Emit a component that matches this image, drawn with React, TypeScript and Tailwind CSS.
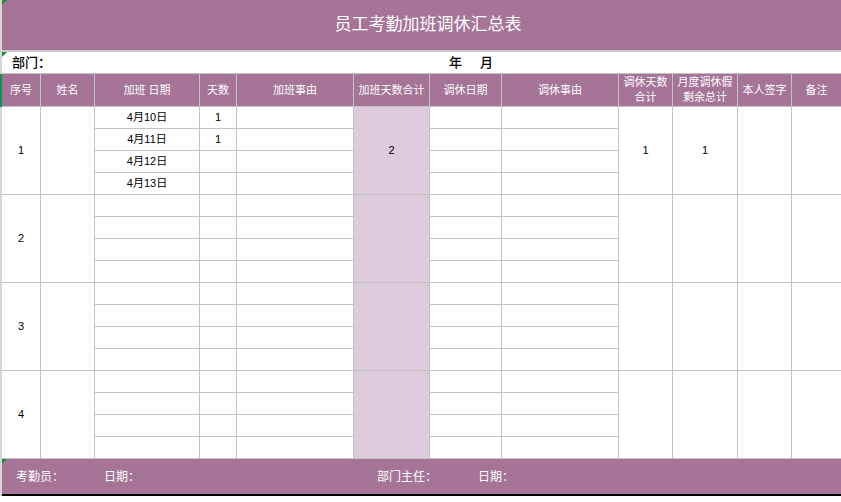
import React from 'react'

const cols = 'grid grid-cols-[39px_54px_105px_37px_117px_76px_72px_117px_54px_65px_54px_49px]'
const line = 'border-[#c3c3c3]'

const headers: string[][] = [
  ['序号'],
  ['姓名'],
  ['加班 日期'],
  ['天数'],
  ['加班事由'],
  ['加班天数合计'],
  ['调休日期'],
  ['调休事由'],
  ['调休天数', '合计'],
  ['月度调休假', '剩余总计'],
  ['本人签字'],
  ['备注'],
]

interface Group {
  no: string
  dates: string[]
  days: string[]
  total: string
  restTotal: string
  remain: string
}

const groups: Group[] = [
  { no: '1', dates: ['4月10日', '4月11日', '4月12日', '4月13日'], days: ['1', '1', '', ''], total: '2', restTotal: '1', remain: '1' },
  { no: '2', dates: ['', '', '', ''], days: ['', '', '', ''], total: '', restTotal: '', remain: '' },
  { no: '3', dates: ['', '', '', ''], days: ['', '', '', ''], total: '', restTotal: '', remain: '' },
  { no: '4', dates: ['', '', '', ''], days: ['', '', '', ''], total: '', restTotal: '', remain: '' },
]

function Corner() {
  return (
    <span className="absolute left-0 top-0 h-0 w-0 border-t-[5px] border-r-[5px] border-t-[#1f8a3b] border-r-transparent" />
  )
}

function Cell({ children, span, pink, last }: { children?: React.ReactNode; span?: boolean; pink?: boolean; last?: boolean }) {
  return (
    <div
      className={`flex items-center justify-center border-b ${last ? '' : 'border-r'} ${line} ${span ? 'row-span-4' : ''} ${pink ? 'bg-[#ddcbdc]' : 'bg-white'}`}
    >
      {children}
    </div>
  )
}

function GroupRows({ g }: { g: Group }) {
  return (
    <div className={`${cols} grid-rows-[22px_22px_22px_22px] text-[11px] text-black`}>
      <Cell span>{g.no}</Cell>
      <Cell span />
      {[0, 1, 2, 3].map((i) => (
        <React.Fragment key={i}>
          <Cell>{g.dates[i]}</Cell>
          <Cell>{g.days[i]}</Cell>
          <Cell />
          {i === 0 && <Cell span pink>{g.total}</Cell>}
          <Cell />
          <Cell />
          {i === 0 && (
            <>
              <Cell span>{g.restTotal}</Cell>
              <Cell span>{g.remain}</Cell>
              <Cell span />
              <Cell span last />
            </>
          )}
        </React.Fragment>
      ))}
    </div>
  )
}

export default function App() {
  return (
    <div className="flex h-[502px] w-[841px] bg-white font-['Liberation_Sans','Noto_Sans_CJK_SC',sans-serif]">
      {/* row header edge */}
      <div className="flex h-[496px] w-[2px] flex-col bg-[#d6d6d6]">
        <div className="h-[74px]" />
        <div className="h-[33px] bg-[#1f8a5a]" />
      </div>

      <div className="flex w-[839px] flex-col">
        <div className={`relative flex h-[52px] items-center justify-center border-b-2 border-[#c9c9c9] bg-[#a57497] pl-[13px] text-[17px] text-white`}>
          <Corner />
          员工考勤加班调休汇总表
        </div>

        <div className={`relative flex h-[22px] items-center border-b ${line} pl-[10px] text-[13px] font-medium text-black`}>
          <Corner />
          <span className="w-[437px]">部门：</span>
          <span>年</span>
          <span className="ml-[18px]">月</span>
        </div>

        <div className={`${cols} h-[33px] bg-[#a57497] text-[11px] leading-[15px] text-white`}>
          {headers.map((h, i) => (
            <div
              key={i}
              className={`flex flex-col items-center justify-center border-b ${i < headers.length - 1 ? 'border-r' : ''} ${line}`}
            >
              {h.map((t) => (
                <span key={t}>{t}</span>
              ))}
            </div>
          ))}
        </div>

        {groups.map((g) => (
          <GroupRows key={g.no} g={g} />
        ))}

        <div className="relative flex h-[37px] items-center border-b-2 border-black bg-[#a57497] text-[12px] text-white">
          <Corner />
          <span className="ml-[14px] w-[88px]">考勤员：</span>
          <span className="w-[273px]">日期：</span>
          <span className="w-[101px]">部门主任：</span>
          <span>日期：</span>
        </div>
      </div>
    </div>
  )
}
